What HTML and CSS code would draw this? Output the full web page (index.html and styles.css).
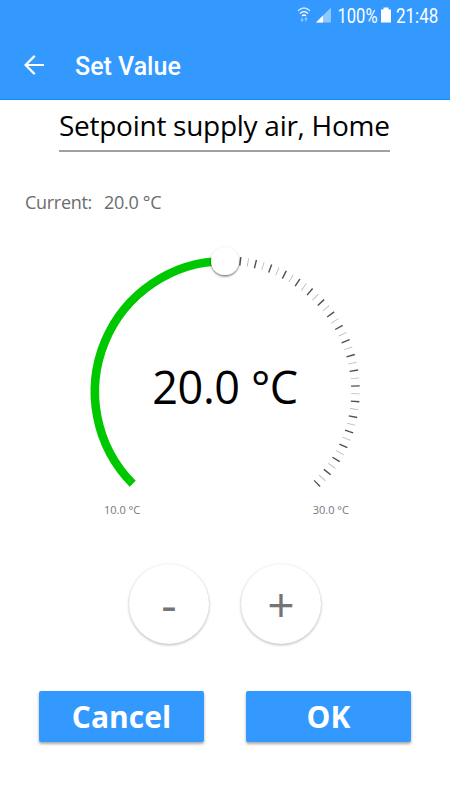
FILE: index.html
```html
<!DOCTYPE html>
<html lang="en">
<head>
    <meta charset="UTF-8">
    <meta name="viewport" content="width=device-width, initial-scale=1.0">
    <title>Set Value</title>
    <link rel="stylesheet" href="styles.css">
</head>
<body>
    <header class="header">
        <!-- status bar -->
        <svg class="status" width="160" height="32" viewBox="290 0 160 32">
            <g fill="none" stroke="#fff" stroke-width="1.3">
                <path d="M298 10.8Q304 5.2 310 10.8" opacity=".75"/>
                <path d="M300 13.5Q304 9.8 308 13.5"/>
                <path d="M302 16Q304 14 306 16"/>
            </g>
            <path d="M302 17.5v3.5M300.7 19.5l1.3 1.8 1.3-1.8M306 21.5V18M304.7 19.5l1.3-1.8 1.3 1.8" fill="none" stroke="#fff" opacity=".5"/>
            <path d="M331 7.5V22.5H316Z" fill="#fff" opacity=".45"/>
            <path d="M323 15.5V22.5H316Z" fill="#fff"/>
            <text transform="translate(337.5 22.5) scale(.85 1)">100%</text>
            <path d="M383.5 7.5h5v2h2.5v13h-10v-13h2.5z" fill="#fff"/>
            <text transform="translate(396 22.5) scale(.87 1)">21:48</text>
        </svg>
        <div class="toolbar">
            <svg class="back" width="20" height="20" viewBox="0 0 20 20">
                <path d="M20 10H1.5M10.7 .9L1.6 10l9.1 9.1"/>
            </svg>
            <h1>Set Value</h1>
        </div>
    </header>

    <main>
        <h2 class="name">Setpoint supply air, Home</h2>

        <p class="current"><span>Current:</span><span>20.0 °C</span></p>

        <div class="dial">
            <svg width="290" height="270" viewBox="80 235 290 270">
                <defs>
                    <filter id="shadow" x="-30%" y="-30%" width="160%" height="160%">
                        <feDropShadow dx="0" dy="1.3" stdDeviation="1.1" flood-opacity=".6"/>
                    </filter>
                </defs>
                <path class="tick-minor" d="M225 260.5A130.5 130.5 0 0 1 316.63 483.92"/>
                <path class="tick-major" d="M225 260.5A130.5 130.5 0 0 1 316.63 483.92"/>
                <path class="progress" d="M132.7 483.8A130.8 130.8 0 0 1 225 261"/>
                <circle cx="225" cy="261" r="14" fill="#fff" filter="url(#shadow)"/>
            </svg>
            <div class="value">20.0 °C</div>
            <div class="limits"><span>10.0 °C</span><span>30.0 °C</span></div>
        </div>

        <div class="steps">
            <button class="step minus">-</button>
            <button class="step plus">+</button>
        </div>

        <div class="actions">
            <button class="btn">Cancel</button>
            <button class="btn">OK</button>
        </div>
    </main>
</body>
</html>
```
FILE: styles.css
```css
* {
    margin: 0;
    padding: 0;
    box-sizing: border-box;
}

body {
    width: 450px;
    height: 800px;
    background: #fff;
    font-family: "Open Sans", "Noto Sans", sans-serif;
    overflow: hidden;
}

.header {
    height: 100px;
    background: #3399ff;
    border-bottom: 1px solid #1a8cf5;
    color: #fff;
}

.status {
    display: block;
    margin-left: auto;
}

.status text {
    font-family: Roboto, sans-serif;
    font-size: 19.5px;
    fill: #fff;
}

.toolbar {
    display: flex;
    align-items: center;
    height: 66px;
    padding-left: 24px;
}

.back {
    fill: none;
    stroke: #fff;
    stroke-width: 2.2;
}

.toolbar h1 {
    margin: 2px 0 0 31px;
    font-family: Roboto, sans-serif;
    font-size: 25px;
    font-weight: 500;
}

main {
    display: flex;
    flex-direction: column;
}

.name {
    width: 331px;
    height: 52px;
    margin-left: 59px;
    border-bottom: 2px solid #a0a0a0;
    font-size: 28px;
    font-weight: 400;
    letter-spacing: -0.27px;
    line-height: 50px;
    white-space: nowrap;
}

.current {
    display: flex;
    gap: 12px;
    height: 24px;
    margin: 38px 0 0 25px;
    color: #6c6c6c;
    font-size: 18px;
    letter-spacing: -0.3px;
    line-height: 24px;
}

.dial {
    display: grid;
    width: 290px;
    height: 290px;
    margin: 21px auto 0;
}

.dial svg,
.value,
.limits {
    grid-area: 1 / 1;
}

.progress {
    fill: none;
    stroke: #00c800;
    stroke-width: 8.6;
}

.tick-major {
    fill: none;
    stroke: #505050;
    stroke-width: 8.6;
    stroke-dasharray: 1.4 13.975;
    stroke-dashoffset: .7;
}

.tick-minor {
    fill: none;
    stroke: #b8b8b8;
    stroke-width: 8.6;
    stroke-dasharray: .8 14.575;
    stroke-dashoffset: -7.287;
}

.value {
    height: 60px;
    margin-top: 122px;
    font-size: 45px;
    letter-spacing: -0.4px;
    line-height: 60px;
    text-align: center;
}

.limits {
    display: flex;
    justify-content: space-between;
    align-self: end;
    padding: 0 21px 7px 24px;
    color: #777;
    font-size: 11px;
    line-height: 16px;
}

.steps {
    display: flex;
    justify-content: center;
    gap: 32px;
    margin-top: 39px;
}

.step {
    width: 80px;
    height: 80px;
    border: none;
    border-radius: 50%;
    background: #fff;
    box-shadow: 0 1px 3px rgba(0, 0, 0, 0.3);
    color: #757575;
    font-family: inherit;
    font-size: 48px;
    line-height: 78px;
}

.actions {
    display: flex;
    gap: 42px;
    margin: 47px 0 0 39px;
}

.btn {
    width: 165px;
    height: 51px;
    border: none;
    border-radius: 2px;
    background: #3399ff;
    box-shadow: 0 2px 3px rgba(0, 0, 0, 0.35);
    color: #fff;
    font-family: inherit;
    font-size: 30px;
    font-weight: 700;
    line-height: 52px;
}
```
